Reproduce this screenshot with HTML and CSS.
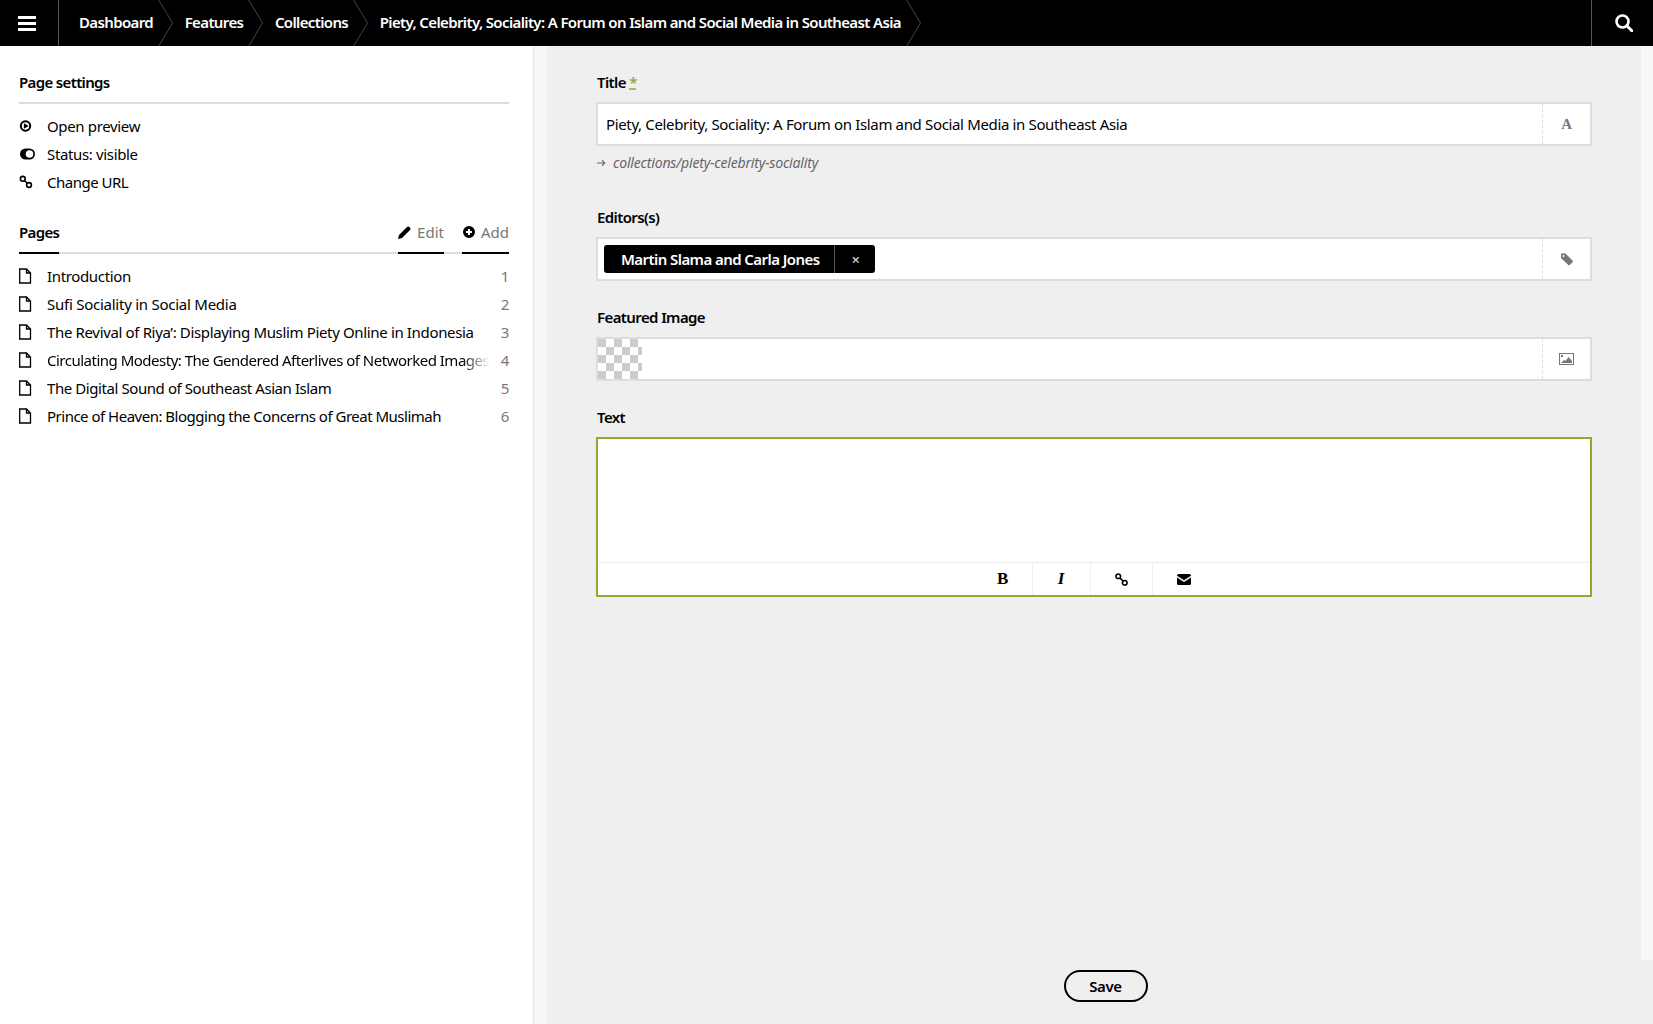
FILE: index.html
```html
<!DOCTYPE html>
<html lang="en">
<head>
<meta charset="utf-8">
<title>Piety, Celebrity, Sociality</title>
<link rel="stylesheet" href="styles.css">
</head>
<body>
<header class="topbar">
  <a class="menu-btn" href="#"><svg class="i-menu" viewBox="0 0 18 15"><path d="M0 0h18v3H0zM0 6h18v3H0zM0 12h18v3H0z"/></svg></a>
  <nav class="crumbs">
    <a class="crumb" href="#">Dashboard</a>
    <a class="crumb" href="#">Features</a>
    <a class="crumb" href="#">Collections</a>
    <a class="crumb" href="#">Piety, Celebrity, Sociality: A Forum on Islam and Social Media in Southeast Asia</a>
  </nav>
  <a class="search-btn" href="#"><svg class="i-search" viewBox="0 0 18 18"><circle cx="7.5" cy="7.5" r="6" fill="none" stroke="#fff" stroke-width="2.6"/><path d="M11.8 11.8l5 5" stroke="#fff" stroke-width="3" stroke-linecap="round"/></svg></a>
</header>
<div class="body">
  <aside class="sidebar">
    <h2 class="side-head"><span class="side-title">Page settings</span></h2>
    <ul class="side-list">
      <li class="side-row"><svg class="ico" viewBox="0 0 16 16"><circle cx="6.500" cy="8" r="4.700" fill="none" stroke="#000" stroke-width="2"/><path d="M4.900 5.200l4.800 2.800-4.800 2.800z"/></svg><span class="side-text">Open preview</span></li>
      <li class="side-row"><svg class="ico" viewBox="0 0 16 16"><path fill-rule="evenodd" d="M6.500 2.500h4a5.500 5.500 0 0 1 0 11h-4a5.500 5.500 0 0 1 0-11zM10.500 4.200a3.800 3.800 0 1 0 0 7.600 3.800 3.800 0 0 0 0-7.600z"/></svg><span class="side-text">Status: visible</span></li>
      <li class="side-row"><svg class="ico" viewBox="0 0 16 16"><circle cx="3.800" cy="4.800" r="2.400" fill="none" stroke="#000" stroke-width="1.600"/><circle cx="10" cy="11" r="2.400" fill="none" stroke="#000" stroke-width="1.600"/><path d="M5.500 6.500l3 3" stroke="#000" stroke-width="1.600"/></svg><span class="side-text tight">Change URL</span></li>
    </ul>
    <div class="side-head pages-head">
      <span class="side-title marked">Pages</span>
      <span class="side-actions">
        <a class="action marked" href="#"><svg class="ico-sm" viewBox="0 0 14 14"><path d="M0 14l1-4 8-8a1.500 1.500 0 0 1 2-.2l1.200 1.200a1.500 1.500 0 0 1-.2 2l-8 8z"/></svg>Edit</a>
        <a class="action marked" href="#"><svg class="ico-sm" viewBox="0 0 14 14"><path fill-rule="evenodd" d="M7 1a6 6 0 1 1 0 12A6 6 0 0 1 7 1zM6 4v2H4v2h2v2h2V8h2V6H8V4z"/></svg>Add</a>
      </span>
    </div>
    <ol class="side-list">
      <li class="side-row"><svg class="ico" viewBox="0 0 16 16"><path class="doc" d="M.7 1h6.800l4 4v10H.7zM7.500 1v4h4"/></svg><span class="side-text">Introduction</span><span class="num">1</span></li>
      <li class="side-row"><svg class="ico" viewBox="0 0 16 16"><path class="doc" d="M.7 1h6.800l4 4v10H.7zM7.500 1v4h4"/></svg><span class="side-text loose">Sufi Sociality in Social Media</span><span class="num">2</span></li>
      <li class="side-row"><svg class="ico" viewBox="0 0 16 16"><path class="doc" d="M.7 1h6.800l4 4v10H.7zM7.500 1v4h4"/></svg><span class="side-text">The Revival of Riya’: Displaying Muslim Piety Online in Indonesia</span><span class="num">3</span></li>
      <li class="side-row"><svg class="ico" viewBox="0 0 16 16"><path class="doc" d="M.7 1h6.800l4 4v10H.7zM7.500 1v4h4"/></svg><span class="side-text fade tight">Circulating Modesty: The Gendered Afterlives of Networked Images</span><span class="num">4</span></li>
      <li class="side-row"><svg class="ico" viewBox="0 0 16 16"><path class="doc" d="M.7 1h6.800l4 4v10H.7zM7.500 1v4h4"/></svg><span class="side-text snug">The Digital Sound of Southeast Asian Islam</span><span class="num">5</span></li>
      <li class="side-row"><svg class="ico" viewBox="0 0 16 16"><path class="doc" d="M.7 1h6.800l4 4v10H.7zM7.500 1v4h4"/></svg><span class="side-text tight">Prince of Heaven: Blogging the Concerns of Great Muslimah</span><span class="num">6</span></li>
    </ol>
  </aside>
  <div class="gutter"></div>
  <main class="main">
    <div class="form-row">
      <form class="form">
        <div class="field">
          <label class="label">Title <abbr class="req">*</abbr></label>
          <div class="box">
            <div class="box-body"><span class="value">Piety, Celebrity, Sociality: A Forum on Islam and Social Media in Southeast Asia</span></div>
            <div class="box-icon"><span class="glyph-a">A</span></div>
          </div>
          <p class="hint"><svg class="hint-arrow" viewBox="0 0 9 8"><path d="M0 4h7.500M5 1.200L7.800 4 5 6.800" fill="none" stroke="#666" stroke-width="1.100"/></svg><em>collections/piety-celebrity-sociality</em></p>
        </div>
        <div class="field">
          <label class="label">Editors(s)</label>
          <div class="box">
            <div class="box-body tags">
              <span class="tag"><span class="tag-text">Martin Slama and Carla Jones</span><span class="tag-x">×</span></span>
            </div>
            <div class="box-icon"><svg class="ico-box" viewBox="0 0 14 14"><path fill-rule="evenodd" d="M1 1.500h4.500l7.200 7.200a1 1 0 0 1 0 1.400l-3 3a1 1 0 0 1-1.400 0L1 6zM3.500 3a1 1 0 1 0 0 2 1 1 0 0 0 0-2z"/></svg></div>
          </div>
        </div>
        <div class="field">
          <label class="label">Featured Image</label>
          <div class="box">
            <div class="box-body image"><span class="checker"></span></div>
            <div class="box-icon"><svg class="ico-img" viewBox="0 0 15 12"><rect x=".5" y=".5" width="14" height="11" fill="none" stroke="#777"/><rect x="2" y="2" width="2" height="2"/><path d="M2 10l3-3 1.500 1L9.500 4l3.500 4v2z"/></svg></div>
          </div>
        </div>
        <div class="field">
          <label class="label">Text</label>
          <div class="editor">
            <div class="editor-area"></div>
            <div class="toolbar">
              <span class="tool tool-b">B</span>
              <span class="tool tool-i">I</span>
              <span class="tool tool-l"><svg class="i-link" viewBox="0 0 14 14"><circle cx="3.500" cy="3.500" r="2.500" fill="none" stroke="#000" stroke-width="1.700"/><circle cx="10.500" cy="10.500" r="2.500" fill="none" stroke="#000" stroke-width="1.700"/><path d="M5.500 5.500l3 3" stroke="#000" stroke-width="1.700"/></svg></span>
              <span class="tool tool-m"><svg class="i-mail" viewBox="0 0 14 11"><path d="M0 1.500A1.500 1.500 0 0 1 1.500 0h11A1.500 1.500 0 0 1 14 1.500v.3L7 6.300 0 1.800zM0 3.400l7 4.500 7-4.500v6.100a1.500 1.500 0 0 1-1.500 1.500h-11A1.500 1.500 0 0 1 0 9.500z"/></svg></span>
            </div>
          </div>
        </div>
      </form>
      <div class="strip"></div>
    </div>
    <footer class="savebar"><button class="save" type="button">Save</button></footer>
  </main>
</div>
</body>
</html>
```
FILE: styles.css
```css
* { box-sizing: border-box; }
html, body { margin: 0; height: 100%; }
body {
  display: flex;
  flex-direction: column;
  height: 1024px;
  overflow: hidden;
  font-family: "Noto Sans", "Open Sans", sans-serif;
  font-size: 15px;
  line-height: 28px;
  color: #000;
  background: #fff;
  letter-spacing: -0.35px;
}
a { color: inherit; text-decoration: none; }
ul, ol { list-style: none; margin: 0; padding: 0; }

.topbar { flex: 0 0 46px; display: flex; align-items: stretch; background: #000; color: #fff; font-weight: 600; letter-spacing: -0.63px; }
.menu-btn { flex: 0 0 59px; padding-left: 18px; border-right: 1px solid #555; display: flex; align-items: center; }
.i-menu { width: 18px; height: 15px; fill: #fff; display: block; }
.crumbs { flex: 1; display: flex; padding-left: 20px; }
.crumb { position: relative; display: flex; align-items: center; margin-right: 31.6px; padding-bottom: 2px; white-space: nowrap; }
.crumb::before, .crumb::after {
  content: "";
  position: absolute;
  right: -20px;
  width: 1px;
  height: 23px;
  background: #444;
}
.crumb::before { top: 0; transform-origin: bottom; transform: skewX(31deg); }
.crumb::after { bottom: 0; transform-origin: top; transform: skewX(-31deg); }
.search-btn { flex: 0 0 62px; border-left: 1px solid #555; display: flex; align-items: center; padding-left: 23px; }
.i-search { width: 18px; height: 18px; display: block; }

.body { flex: 1; display: flex; min-height: 0; }
.sidebar { flex: 0 0 534px; min-width: 0; padding: 22px 24px 0 19px; border-right: 1px solid #e6e6e6; background: #fff; }
.gutter { flex: 0 0 13px; background: #f7f7f7; }
.side-head { margin: 0; height: 36px; font-size: inherit; font-weight: 600; letter-spacing: -0.65px; border-bottom: 2px solid #ddd; display: flex; justify-content: space-between; align-items: flex-start; }
.side-title { line-height: 28px; }
.pages-head { margin-top: 22px; }
.marked { height: 36px; border-bottom: 2px solid #000; }
.side-actions { display: flex; gap: 18px; }
.action { display: flex; align-items: flex-start; gap: 5px; color: #777; font-weight: 400; line-height: 28px; letter-spacing: 0; }
.ico-sm { width: 14px; height: 14px; display: block; }
.action .ico-sm { margin-top: 7px; }
.side-list { margin-top: 8px; }
.side-row { display: flex; align-items: center; height: 28px; }
.ico { flex: 0 0 16px; width: 16px; height: 16px; margin-right: 12px; margin-bottom: 1px; }
.doc { fill: none; stroke: #000; stroke-width: 1.300; }
.side-text { flex: 1; min-width: 0; white-space: nowrap; overflow: hidden; }
.tight { letter-spacing: -0.5px; }
.snug { letter-spacing: -0.42px; }
.loose { letter-spacing: -0.25px; }
.fade { -webkit-mask-image: linear-gradient(to right, #000 calc(100% - 28px), transparent); mask-image: linear-gradient(to right, #000 calc(100% - 28px), transparent); }
.num { flex: 0 0 auto; margin-left: 11px; color: #777; }

.main { flex: 1; min-width: 0; display: flex; flex-direction: column; background: #efefef; }
.form-row { flex: 1; display: flex; min-height: 0; }
.form { flex: 1; padding: 22px 49px 0 49px; }
.strip { flex: 0 0 12px; background: #f7f7f7; }
.savebar { flex: 0 0 64px; display: flex; justify-content: center; padding: 10px 0 0 11px; }
.save { width: 84px; height: 32px; border: 2px solid #000; border-radius: 16px; background: transparent; font: inherit; font-weight: 600; letter-spacing: inherit; color: #000; padding: 0; }

.field { margin-bottom: 22px; }
.label { display: block; padding-left: 1px; font-weight: 600; letter-spacing: -0.6px; height: 34px; line-height: 28px; }
.req { color: #8fab2e; text-decoration: underline dashed; }
.box { display: flex; height: 44px; border: 2px solid #ddd; background: #fff; }
.box-body { flex: 1; min-width: 0; padding: 0 9px 0 8px; display: flex; align-items: center; }
.box-icon { flex: 0 0 48px; border-left: 1px dashed #ddd; display: flex; align-items: center; justify-content: center; }
.glyph-a { font-family: "Liberation Serif", serif; font-weight: 700; font-size: 15px; color: #777; }
.ico-box { width: 14px; height: 14px; fill: #777; }
.ico-img { width: 15px; height: 12px; fill: #777; }
.hint { margin: 3px 0 -4px; padding-left: 1px; display: flex; align-items: center; gap: 7px; color: #666; font-size: 14px; line-height: 28px; height: 28px; letter-spacing: -0.17px; }
.field:first-child { margin-bottom: 30px; }
.hint-arrow { width: 9px; height: 8px; }
.tags { padding: 0 6px; }
.tag { display: flex; height: 28px; background: #000; color: #fff; border-radius: 3px; font-weight: 600; letter-spacing: -0.57px; align-items: stretch; }
.tag-text { padding: 0 15px 0 17px; border-right: 1px solid #555; }
.tag-x { flex: 0 0 40px; text-align: center; color: #ccc; }
.image { padding: 0; }
.checker { width: 44px; height: 40px; background: repeating-conic-gradient(#ccc 0 25%, #fff 0 50%) 8px 0 / 16px 16px; }
.editor { height: 160px; border: 2px solid #8fab2e; background: #fff; display: flex; flex-direction: column; }
.editor-area { flex: 1; }
.toolbar { flex: 0 0 33px; border-top: 1px solid #eee; display: flex; justify-content: center; }
.tool { display: flex; align-items: center; justify-content: center; border-right: 1px solid #eee; }
.tool-b, .tool-i { font-family: "Liberation Serif", serif; font-size: 17px; font-weight: 700; }
.tool-b { width: 59px; }
.tool-i { width: 58px; font-style: italic; }
.tool-l { width: 62px; }
.tool-m { width: 62px; border-right: 0; }
.i-link { width: 13px; height: 13px; }
.i-mail { width: 14px; height: 11px; }
```
